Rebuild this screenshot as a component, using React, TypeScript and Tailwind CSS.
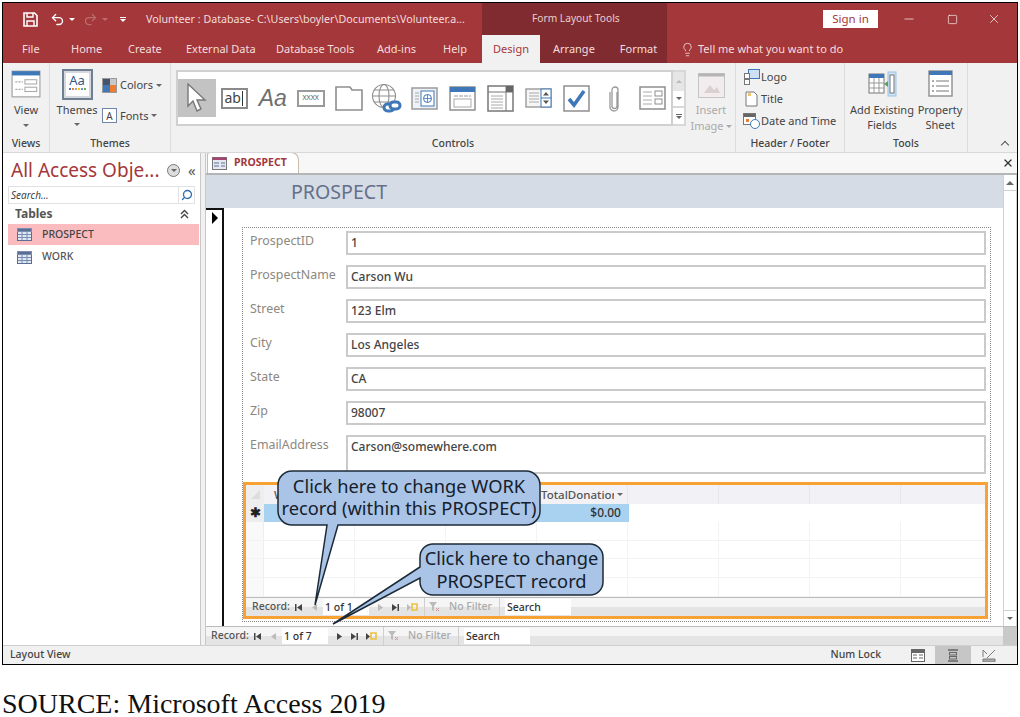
import { Lightbulb, Minus, Redo2, Search, Square, Undo2, X } from "lucide-react"

const grayStroke = "#7a7a7a"
const blue = "#3f78b8"

const tabs = [
  { label: "File", width: "w-[49px]" },
  { label: "Home", width: "w-[57px]" },
  { label: "Create", width: "w-[58px]" },
  { label: "External Data", width: "w-[90px]" },
  { label: "Database Tools", width: "w-[101px]" },
  { label: "Add-ins", width: "w-[66px]" },
  { label: "Help", width: "w-[36px]" },
]

const fields = [
  { label: "ProspectID", value: "1" },
  { label: "ProspectName", value: "Carson Wu" },
  { label: "Street", value: "123 Elm" },
  { label: "City", value: "Los Angeles" },
  { label: "State", value: "CA" },
  { label: "Zip", value: "98007" },
  { label: "EmailAddress", value: "Carson@somewhere.com", tall: true },
]

const themeDots = ["#3f78b8", "#ed7d31", "#a5a5a5", "#ffc000", "#5b9bd5", "#70ad47"]

function FormIcon({ size = 30 }: { size?: number }) {
  return (
    <svg width={size} height={size} viewBox="0 0 28 28" fill="none">
      <rect x="1" y="2" width="26" height="24" fill="#fff" stroke="#9a9a9a" />
      <rect x="1" y="2" width="26" height="4" fill={blue} />
      <path d="M4 12h7M4 19h7" stroke="#aaa" strokeDasharray="2 1" />
      <rect x="13" y="10" width="11" height="4" stroke="#aaa" />
      <rect x="13" y="17" width="11" height="4" stroke="#aaa" />
    </svg>
  )
}

function Caret({ className = "" }: { className?: string }) {
  return <span className={`inline-block h-0 w-0 border-x-[3px] border-t-[3px] border-x-transparent border-t-[#666] ${className}`} />
}

function TitleBar() {
  return (
    <div className="flex h-[32px] bg-[#a4373a] text-[#f1dcdc]">
      <div className="flex w-[479px] items-center">
        <svg className="ml-[20px]" width="15" height="15" viewBox="0 0 15 15" fill="none">
          <path d="M1 1h10.5L14 3.5V14H1z" stroke="#fff" strokeWidth="1.6" />
          <path d="M4 1v4h6V1M4 14V9h7v5" stroke="#fff" strokeWidth="1.4" />
        </svg>
        <Undo2 className="ml-[12px] text-white" size={15} strokeWidth={2.2} />
        <span className="ml-[4px] h-0 w-0 border-x-[3px] border-t-[3px] border-x-transparent border-t-white" />
        <Redo2 className="ml-[8px] text-[#bd6c6e]" size={15} />
        <span className="ml-[4px] h-0 w-0 border-x-[3px] border-t-[3px] border-x-transparent border-t-[#bd6c6e]" />
        <span className="ml-[12px] flex flex-col items-center gap-[1px]">
          <span className="h-[1px] w-[6px] bg-white" />
          <span className="h-0 w-0 border-x-[3px] border-t-[3px] border-x-transparent border-t-white" />
        </span>
        <span className="ml-[20px] text-[10.7px] whitespace-nowrap">Volunteer : Database- C:\Users\boyler\Documents\Volunteer.a...</span>
      </div>
      <div className="flex w-[185px] items-center bg-[#7f2b2f] pl-[50px] text-[10.2px] text-[#e8cfcf]">Form Layout Tools</div>
      <div className="flex flex-1 items-center text-white">
        <button className="ml-[156px] h-[18px] w-[55px] bg-white text-[11.5px] leading-[18px] text-[#a4373a]">Sign in</button>
        <Minus className="ml-[24px]" size={14} strokeWidth={1.2} />
        <Square className="ml-[31px]" size={11} strokeWidth={1.4} />
        <X className="ml-[29px]" size={14} strokeWidth={1.2} />
      </div>
    </div>
  )
}

function TabRow() {
  return (
    <div className="flex h-[28px] bg-[#a4373a] text-[11px] text-[#f3dede]">
      <div className="flex w-[479px] items-center whitespace-nowrap pl-[19px]">
        {tabs.map((t) => (
          <span key={t.label} className={t.width}>{t.label}</span>
        ))}
      </div>
      <div className="flex w-[185px] items-center bg-[#7f2b2f]">
        <span className="flex h-full w-[58px] items-center justify-center bg-[#f1f1f1] text-[#a4373a]">Design</span>
        <span className="ml-[13px]">Arrange</span>
        <span className="ml-[25px]">Format</span>
      </div>
      <div className="ml-[13px] flex items-center gap-[3px]">
        <Lightbulb size={15} strokeWidth={1.3} />
        <span>Tell me what you want to do</span>
      </div>
    </div>
  )
}

function RibbonGroup({ width, label, children }: { width: string; label: string; children: React.ReactNode }) {
  return (
    <div className={`relative flex flex-col ${width} border-r border-[#dcdcdc]`}>
      <div className="flex-1">{children}</div>
      <div className="pb-[2px] text-center text-[10.5px] font-medium leading-[14px] text-[#444]">{label}</div>
    </div>
  )
}

function GalleryIcons() {
  return (
    <>
      <div className="flex h-[38px] w-[38px] items-center justify-center bg-[#c3c3c3]">
        <svg width="22" height="30" viewBox="0 0 22 30" fill="#fff" stroke="#777" strokeWidth="1.4">
          <path d="M2 1v22l5-5 4 10 4-2-4-9h8z" />
        </svg>
      </div>
      <div className="flex h-[38px] w-[38px] items-center justify-center">
        <span className="flex h-[21px] w-[27px] items-center border-2 border-[#8a8a8a] pl-[1px] text-[14px] leading-none text-[#444]">ab<span className="ml-[1px] h-[15px] w-[1px] bg-[#333]" /></span>
      </div>
      <div className="flex h-[38px] w-[38px] items-center justify-center font-['Liberation_Sans'] text-[23px] italic text-[#6e6e6e]">Aa</div>
      <div className="flex h-[38px] w-[38px] items-center justify-center">
        <span className="flex h-[17px] w-[28px] items-center justify-center border-2 border-[#9a9a9a] text-[7px] text-[#555]">XXXX</span>
      </div>
      <div className="flex h-[38px] w-[38px] items-center justify-center">
        <svg width="28" height="25" viewBox="0 0 28 25" fill="none" stroke="#8e8e8e" strokeWidth="1.6">
          <path d="M1 24V1h14l2 3h10v20z" />
        </svg>
      </div>
      <div className="flex h-[38px] w-[38px] items-center justify-center">
        <svg width="31" height="31" viewBox="0 0 31 31" fill="none">
          <g stroke="#8e8e8e" strokeWidth="1.1">
            <circle cx="13" cy="13" r="11.5" />
            <ellipse cx="13" cy="13" rx="5" ry="11.5" />
            <path d="M1.5 13h23M3 7h20M3 19h20" />
          </g>
          <g stroke={blue} strokeWidth="3" fill="#fff">
            <rect x="13" y="21" width="10" height="7" rx="3.5" />
            <rect x="19" y="19" width="10" height="7" rx="3.5" />
          </g>
        </svg>
      </div>
      <div className="flex h-[38px] w-[38px] items-center justify-center">
        <svg width="27" height="23" viewBox="0 0 27 23" fill="#fff">
          <rect x="1" y="1" width="25" height="21" stroke="#9a9a9a" strokeWidth="1.5" fill="#eef1f5" />
          <path d="M4 6h4M4 9h4M4 12h4M4 15h4" stroke="#aaa" />
          <rect x="10" y="4" width="13" height="15" stroke={blue} />
          <circle cx="16.5" cy="11.5" r="4" stroke={blue} />
          <path d="M12.5 11.5h8M16.5 7.500v8" stroke={blue} strokeWidth=".8" />
        </svg>
      </div>
      <div className="flex h-[38px] w-[38px] items-center justify-center">
        <svg width="27" height="25" viewBox="0 0 27 25" fill="#fff">
          <rect x="1" y="1" width="25" height="23" stroke="#8e8e8e" strokeWidth="1.5" />
          <rect x="1" y="1" width="25" height="5" fill={blue} />
          <path d="M5 10h17" stroke="#999" strokeDasharray="4 1" />
          <rect x="5" y="13" width="17" height="8" stroke="#aaa" />
        </svg>
      </div>
      <div className="flex h-[38px] w-[38px] items-center justify-center">
        <svg width="27" height="27" viewBox="0 0 27 27" fill="#fff">
          <rect x="1" y="1" width="25" height="25" stroke="#777" strokeWidth="1.5" />
          <path d="M1 7h25M19 1v25" stroke="#777" />
          <rect x="19" y="1" width="7" height="6" fill="#666" />
          <path d="M4 11h12M4 14h12M4 17h12M4 20h12M4 23h12" stroke="#aaa" />
        </svg>
      </div>
      <div className="flex h-[38px] w-[38px] items-center justify-center">
        <svg width="27" height="20" viewBox="0 0 27 20" fill="#fff">
          <rect x="1" y="1" width="25" height="18" stroke="#9a9a9a" strokeWidth="1.4" fill="#f6f6f6" />
          <path d="M4 5h10M4 8h10M4 11h10M4 14h10" stroke="#aaa" />
          <rect x="16" y="1" width="10" height="18" stroke={blue} />
          <path d="M16 10h10" stroke={blue} />
          <path d="M21 4l3 3.500h-6zM21 16l3-3.500h-6z" fill="#555" />
        </svg>
      </div>
      <div className="flex h-[38px] w-[38px] items-center justify-center">
        <svg width="27" height="27" viewBox="0 0 27 27" fill="#fff">
          <rect x="1" y="1" width="25" height="25" stroke="#8e8e8e" strokeWidth="1.5" />
          <path d="M6 14l5 6L21 6" fill="none" stroke={blue} strokeWidth="3.600" />
        </svg>
      </div>
      <div className="flex h-[38px] w-[38px] items-center justify-center">
        <svg width="12" height="28" viewBox="0 0 12 28" fill="none" stroke="#999" strokeWidth="1.3">
          <path d="M8 7v14a2.500 2.500 0 0 1-5 0V5a3 3 0 0 1 6 0v17a4 4 0 0 1-8 0V7" transform="translate(1 1)" />
        </svg>
      </div>
      <div className="flex h-[38px] w-[38px] items-center justify-center">
        <svg width="27" height="24" viewBox="0 0 27 24" fill="#fff" stroke="#8e8e8e">
          <rect x="1" y="1" width="25" height="22" strokeWidth="1.5" />
          <path d="M4 6h9M4 10h9M4 14h9M4 18h9" stroke="#aaa" />
          <rect x="16" y="5" width="7" height="5" />
          <rect x="16" y="13" width="7" height="5" />
        </svg>
      </div>
    </>
  )
}

function Ribbon() {
  return (
    <div className="flex h-[89px] bg-[#f1f1f1] text-[11px] text-[#444]">
      <RibbonGroup width="w-[47px]" label="Views">
        <div className="flex flex-col items-center pt-[6px]">
          <FormIcon />
          <span className="mt-[4px] leading-[14px]">View</span>
          <Caret className="mt-[7px]" />
        </div>
      </RibbonGroup>
      <RibbonGroup width="w-[121px]" label="Themes">
        <div className="flex gap-[3px] pl-[5px] pt-[6px]">
          <div className="flex w-[44px] flex-col items-center">
            <div className="flex h-[31px] w-[31px] flex-col items-center border-2 border-[#6f7f91] bg-[#d4d9e0] p-[2px]">
              <div className="flex w-full flex-1 flex-col items-center bg-white">
                <span className="text-[13px] leading-[15px] text-[#2f5a8a]">Aa</span>
                <span className="flex gap-[1px]">
                  {themeDots.map((c) => (
                    <span key={c} className="h-[2px] w-[2px]" style={{ backgroundColor: c }} />
                  ))}
                </span>
              </div>
            </div>
            <span className="mt-[3px] leading-[14px]">Themes</span>
            <Caret className="mt-[6px]" />
          </div>
          <div className="flex flex-col gap-[14px] pt-[8px]">
            <div className="flex items-center gap-[3px]">
              <span className="grid h-[15px] w-[15px] grid-cols-2 border border-[#999]">
                <span className="bg-[#44546a]" /><span className="bg-[#c9c9c9]" />
                <span className="bg-[#3f78b8]" /><span className="bg-[#ed7d31]" />
              </span>
              <span>Colors</span>
              <Caret />
            </div>
            <div className="flex items-center gap-[3px]">
              <span className="flex h-[15px] w-[15px] items-center justify-center border border-[#6f86a8] bg-white text-[10px] leading-none">A</span>
              <span>Fonts</span>
              <Caret />
            </div>
          </div>
        </div>
      </RibbonGroup>
      <RibbonGroup width="w-[565px]" label="Controls">
        <div className="flex pl-[5px] pt-[7px]">
          <div className="flex h-[56px] w-[497px] items-center border-2 border-[#d0d0d0] bg-white">
            <GalleryIcons />
          </div>
          <div className="flex h-[56px] w-[13px] flex-col border-y-2 border-r-2 border-[#d8d8d8] bg-white">
            <span className="flex h-[19px] items-center justify-center bg-[#e6e6e6]"><span className="h-0 w-0 border-x-[3px] border-b-[3px] border-x-transparent border-b-[#bbb]" /></span>
            <span className="flex h-[17px] items-center justify-center border-b-2 border-[#d8d8d8]"><Caret /></span>
            <span className="flex flex-1 flex-col items-center justify-center gap-[1px]"><span className="h-[1px] w-[6px] bg-[#666]" /><Caret /></span>
          </div>
          <div className="ml-[2px] flex w-[46px] flex-col items-center leading-[16px] text-[#aaa]">
            <svg width="27" height="25" viewBox="0 0 27 25" className="mt-[3px]">
              <rect x=".5" y=".5" width="26" height="24" fill="#f3ecee" stroke="#c5c5c5" />
              <rect x=".5" y=".5" width="26" height="3" fill="#b5b5b5" />
              <path d="M6 20l6-8 4 5 3-3 3 6z" fill="#d9d0d2" />
            </svg>
            <span className="mt-[4px]">Insert</span>
            <span className="flex items-center gap-[2px] whitespace-nowrap">Image<span className="h-0 w-0 border-x-[3px] border-t-[3px] border-x-transparent border-t-[#aaa]" /></span>
          </div>
        </div>
      </RibbonGroup>
      <RibbonGroup width="w-[109px]" label="Header / Footer">
        <div className="flex flex-col gap-[5px] pl-[7px] pt-[5px] leading-[17px]">
          <div className="flex items-center gap-[1px]">
            <svg width="17" height="17" viewBox="0 0 17 17" fill="#fff" stroke="#777">
              <rect x="5.500" y="1.500" width="11" height="9" fill="#cfe0f3" stroke={blue} />
              <rect x="1.500" y="5.500" width="5" height="5" />
              <rect x="1.500" y="11.500" width="5" height="5" />
            </svg>
            <span>Logo</span>
          </div>
          <div className="flex items-center gap-[3px] pl-[2px]">
            <svg width="13" height="16" viewBox="0 0 13 16" fill="#fff" stroke="#777">
              <path d="M1 1h8l3 3v11H1z" />
              <path d="M3 2h3v3H3z" fill="#f0c46c" stroke="none" />
            </svg>
            <span>Title</span>
          </div>
          <div className="flex items-center gap-[1px]">
            <svg width="17" height="17" viewBox="0 0 17 17" fill="#fff" stroke="#777">
              <rect x=".5" y="1.500" width="12" height="11" />
              <path d="M1 2h11v3H1z" fill="#666" stroke="none" />
              <path d="M3 7h3v3H3z" fill="#ed7d31" stroke="none" />
              <circle cx="12" cy="12" r="4.500" stroke={blue} />
            </svg>
            <span className="whitespace-nowrap">Date and Time</span>
          </div>
        </div>
      </RibbonGroup>
      <RibbonGroup width="w-[123px]" label="Tools">
        <div className="flex gap-[4px] pl-[5px] pt-[7px] text-center leading-[15px]">
          <div className="flex w-[64px] flex-col items-center whitespace-nowrap">
            <svg width="29" height="27" viewBox="0 0 29 27" fill="#fff">
              <rect x="1" y="4" width="15" height="19" stroke="#777" />
              <rect x="1" y="4" width="15" height="4" fill={blue} />
              <path d="M1 13h15M1 18h15M6 8v15M11 8v15" stroke="#999" />
              <rect x="20" y="2" width="8" height="24" fill="#cfe3f5" stroke="#9cc3e6" />
              <rect x="22" y="5" width="4" height="18" stroke="#777" />
              <path d="M16 14l4-3v6z" fill="#5aa05a" />
            </svg>
            <span className="mt-[5px]">Add Existing</span>
            <span>Fields</span>
          </div>
          <div className="flex w-[44px] flex-col items-center whitespace-nowrap">
            <svg width="25" height="27" viewBox="0 0 25 27" fill="#fff">
              <rect x="1" y="1" width="23" height="25" stroke="#8e8e8e" strokeWidth="1.4" />
              <rect x="1" y="1" width="23" height="4" fill={blue} />
              <path d="M8 11h13M8 16h13M8 21h13" stroke="#777" />
              <path d="M4 11h2M4 16h2M4 21h2" stroke="#555" />
            </svg>
            <span className="mt-[5px]">Property</span>
            <span>Sheet</span>
          </div>
        </div>
      </RibbonGroup>
      <div className="relative flex-1">
        <span className="absolute bottom-[5px] right-[9px] h-[6px] w-[6px] translate-y-[1px] rotate-45 border-l border-t border-[#555]" />
      </div>
    </div>
  )
}

function TableIcon() {
  return (
    <svg width="15" height="13" viewBox="0 0 15 13" fill="#fff" stroke="#7b8db0">
      <rect x=".5" y=".5" width="14" height="12" fill="#dfe7f3" stroke="#5b6f96" />
      <rect x=".5" y=".5" width="14" height="3" fill="#5b6f96" />
      <path d="M1 6.500h13M1 9.500h13M5 4v8M10 4v8" />
    </svg>
  )
}

function NavPane() {
  return (
    <div className="flex w-[197px] shrink-0 flex-col bg-white">
      <div className="flex h-[33px] items-center pl-[8px] pt-[2px]">
        <span className="w-[156px] text-[19px] leading-none whitespace-nowrap text-[#a4373a]">All Access Obje...</span>
        <span className="flex h-[13px] w-[13px] items-center justify-center rounded-full border border-[#777] bg-[#ddd]"><Caret /></span>
        <span className="ml-[8px] text-[15px] leading-none text-[#555]">«</span>
      </div>
      <div className="mx-[5px] flex h-[18px] items-center border border-[#e2e2e2] pl-[2px] font-['Open_Sans'] text-[10px] italic text-[#333]">
        <span className="flex-1">Search...</span>
        <span className="flex h-full w-[16px] items-center justify-center border-l border-[#e2e2e2]"><Search className="-scale-x-100 text-[#2f6fb0]" size={12} strokeWidth={2.6} /></span>
      </div>
      <div className="flex h-[20px] items-center pl-[12px] pr-[11px] text-[12px] font-bold text-[#555]">
        <span className="flex-1">Tables</span>
        <svg width="9" height="10" viewBox="0 0 9 10" fill="none" stroke="#444" strokeWidth="1.4"><path d="M1 5l3.500-3.500L8 5M1 9l3.500-3.500L8 9" /></svg>
      </div>
      <div className="ml-[5px] mr-[1px] flex h-[21px] items-center gap-[10px] bg-[#fbbcc0] pl-[9px] text-[10.5px] font-medium text-[#444]">
        <TableIcon />PROSPECT
      </div>
      <div className="ml-[5px] mr-[1px] mt-[2px] flex h-[20px] items-center gap-[10px] pl-[9px] text-[10.5px] font-medium text-[#555]">
        <TableIcon />WORK
      </div>
    </div>
  )
}

function NavArrow({ kind, dim }: { kind: "first" | "prev" | "next" | "last" | "new"; dim?: boolean }) {
  const fill = dim ? "#bbb" : "#444"
  return (
    <svg width="11" height="9" viewBox="0 0 11 9" fill={fill}>
      {kind === "first" && <path d="M2 1h1.500v7H2zM9 1v7L4 4.500z" />}
      {kind === "prev" && <path d="M8 1v7L3 4.500z" />}
      {kind === "next" && <path d="M3 1v7l5-3.500z" />}
      {kind === "last" && <path d="M2 1v7l5-3.500zM7.500 1H9v7H7.500z" />}
      {kind === "new" && (
        <>
          <path d="M0 1v7l4-3.500z" fill={dim ? "#bbb" : "#444"} />
          <path d="M5 1h5v6H5z" fill="none" stroke="#eac23e" strokeWidth="1.600" />
        </>
      )}
    </svg>
  )
}

function RecordNav({ page, nested }: { page: string; nested?: boolean }) {
  return (
    <div className="flex h-[18px] items-center bg-[linear-gradient(#f5f5f5_50%,#e4e4e4_50%)] text-[10.5px] font-medium text-[#555]">
      <span className={`${nested ? "ml-[6px]" : "ml-[5px]"} w-[41px]`}>Record:</span>
      <NavArrow kind="first" />
      <span className="ml-[5px]"><NavArrow kind="prev" dim /></span>
      <span className="ml-[3px] h-[16px] w-[46px] bg-white pl-[2px] leading-[16px] text-[#333]">{page}</span>
      <span className="ml-[6px]"><NavArrow kind="next" dim={nested} /></span>
      <span className="ml-[4px]"><NavArrow kind="last" /></span>
      <span className="ml-[6px]"><NavArrow kind="new" dim={nested} /></span>
      <span className="ml-[6px] flex h-full w-[76px] items-center border-x border-[#cfcfcf] pl-[4px] text-[#aaa]">
        <svg width="11" height="10" viewBox="0 0 11 10" fill="#bbb"><path d="M0 0h8L5 4v5L3 8V4z" /><path d="M7 6l3 3M10 6L7 9" stroke="#c99" fill="none" /></svg>
        <span className="ml-[9px] whitespace-nowrap">No Filter</span>
      </span>
      <span className="ml-[5px] h-[16px] w-[66px] bg-white pl-[2px] leading-[16px] text-[#333]">Search</span>
    </div>
  )
}

function SubDatasheet() {
  const cols = [0, 1, 2, 3, 4, 5, 6, 7]
  const rows = [0, 1, 2, 3]
  return (
    <div className="flex h-[137px] flex-col overflow-hidden border-[3px] border-[#f7a233] bg-white">
      <div className="flex h-[19px] bg-[#f1f1f6]">
        <div className="flex w-[18px] shrink-0 items-center justify-center bg-[#eeeeee]"><span className="h-0 w-0 border-b-[9px] border-l-[9px] border-b-[#ddd] border-l-transparent" /></div>
        {cols.map((c) => (
          <div key={c} className="flex w-[91px] shrink-0 items-center overflow-hidden border-r border-[#e6e6ec] pl-[4px] text-[11.5px] font-medium text-[#555]">
            {c === 0 && <span className="pl-[6px]">W</span>}
            {c === 3 && (
              <>
                <span className="w-[73px] overflow-hidden whitespace-nowrap">TotalDonation</span>
                <Caret className="ml-[3px] shrink-0" />
              </>
            )}
          </div>
        ))}
      </div>
      <div className="flex h-[18px]">
        <div className="flex w-[18px] items-center justify-center bg-[#eeeeee] text-[13px] font-bold leading-none text-[#222]">✱</div>
        <div className="flex w-[365px] items-center justify-end bg-[#a9d1f0] pr-[8px] text-[12px] font-medium text-[#333]">$0.00</div>
      </div>
      {rows.map((r) => (
        <div key={r} className="flex h-[19px] border-b border-[#f3f3f3]">
          <div className="w-[18px] shrink-0 border-r border-[#eee] bg-[#f9f9f9]" />
          {cols.map((c) => (
            <div key={c} className="w-[91px] shrink-0 border-r border-[#f3f3f3]" />
          ))}
        </div>
      ))}
      <div className="mt-auto border-t border-[#bbb]">
        <RecordNav page="1 of 1" nested />
      </div>
    </div>
  )
}

function FormBody() {
  return (
    <div className="flex flex-1 overflow-hidden bg-white">
      <div className="flex w-[797px] flex-col">
        <div className="flex h-[33px] items-center bg-[#d6dce5] pl-[85px] text-[19.6px] text-[#64708a]">PROSPECT</div>
        <div className="flex flex-1">
          <div className="h-full w-[18px] border-r-2 border-t-2 border-[#111] pl-[6px] pt-[2px]">
            <span className="block h-0 w-0 border-y-[6px] border-l-[6px] border-y-transparent border-l-black" />
          </div>
          <div className="flex-1 pl-[18px] pt-[19px]">
            <div className="h-[395px] w-[749px] border border-dotted border-[#888] pt-[3px]">
              <div className="flex flex-col gap-[10px] pl-[7px] pr-[4px]">
                {fields.map((f) => (
                  <div key={f.label} className="flex">
                    <span className="w-[96px] shrink-0 text-[12.400px] leading-[20px] text-[#8c8880]">{f.label}</span>
                    <span className={`${f.tall ? "h-[39px]" : "h-[24px]"} flex-1 border-2 border-[#cacaca] pl-[3px] text-[12px] leading-[20px] font-medium text-[#444]`}>{f.value}</span>
                  </div>
                ))}
              </div>
              <div className="mr-[2px] mt-[8px]">
                <SubDatasheet />
              </div>
            </div>
          </div>
        </div>
      </div>
      <div className="flex w-[14px] flex-col border-x border-[#d0d0d0] bg-white">
        <span className="flex h-[16px] items-center justify-center border-b border-[#d0d0d0]"><span className="h-0 w-0 border-x-[4px] border-b-[4px] border-x-transparent border-b-[#666]" /></span>
        <span className="flex-1" />
        <span className="flex h-[16px] items-center justify-center border-t border-[#d0d0d0]"><Caret /></span>
      </div>
    </div>
  )
}

function DocumentArea() {
  return (
    <div className="flex min-w-0 flex-1 flex-col">
      <div className="flex h-[22px] items-end border-b-2 border-[#b5b5b5] bg-[#f7f7f7]">
        <div className="ml-[1px] flex h-[21px] w-[92px] items-center gap-[7px] rounded-tl-[3px] rounded-tr-[8px] border-x border-t border-[#c8bcae] bg-white pl-[4px] text-[10.5px] font-bold text-[#a4373a]">
          <svg width="15" height="13" viewBox="0 0 15 13" fill="#fff" stroke="#777">
            <rect x=".5" y=".5" width="14" height="12" fill="#e7e9f2" />
            <rect x=".5" y=".5" width="14" height="2.500" fill="#a3456f" stroke="none" />
            <path d="M2 6h5M2 9h5M9 6h4M9 9h4" stroke="#5b6f96" />
          </svg>
          PROSPECT
        </div>
        <X className="mb-[4px] ml-auto mr-[3px] text-[#333]" size={12} strokeWidth={2.6} />
      </div>
      <FormBody />
      <div className="flex h-[19px] border-t border-[#bbb]">
        <div className="w-[797px]"><RecordNav page="1 of 7" /></div>
        <div className="flex-1 bg-[#c9c9c9]" />
      </div>
    </div>
  )
}

function StatusBar() {
  return (
    <div className="flex h-[19px] items-center border-t border-[#cfcfcf] bg-[#f1f1f1] pl-[7px] pr-[11px] text-[10.5px] font-medium text-[#444]">
      <span className="flex-1">Layout View</span>
      <span>Num Lock</span>
      <span className="ml-[19px] flex h-full w-[35px] items-center justify-center">
        <svg width="14" height="13" viewBox="0 0 14 13" fill="#fff" stroke="#666"><rect x=".5" y=".5" width="13" height="12" /><rect x=".5" y=".5" width="13" height="3" fill="#666" /><path d="M2 6h4M2 9h4M8 6h4M8 9h4" /></svg>
      </span>
      <span className="flex h-full w-[36px] items-center justify-center bg-[#c6c6c6]">
        <svg width="12" height="13" viewBox="0 0 12 13" fill="none" stroke="#666"><path d="M1 1h10M1 12h10" strokeWidth="1.500" /><rect x="2.500" y="3.500" width="7" height="2.500" /><rect x="2.500" y="7.500" width="7" height="2.500" /></svg>
      </span>
      <span className="flex h-full w-[35px] items-center justify-center">
        <svg width="14" height="13" viewBox="0 0 14 13" fill="none" stroke={grayStroke}><path d="M1 1l4 4M13 1L5 9M1 1v7" /><path d="M1 10h12v3H1z" fill="#aaa" /></svg>
      </span>
    </div>
  )
}

function Callouts() {
  return (
    <>
      <svg className="absolute left-0 top-0" width="1020" height="717" fill="#a9c4e6" stroke="#1d2a38" strokeWidth="1.500">
        <path d="M292 471H526a14 14 0 0 1 14 14V511a14 14 0 0 1-14 14H338L315 605 327 525H292a14 14 0 0 1-14-14V485a14 14 0 0 1 14-14Z" />
        <path d="M433 544H590a13 13 0 0 1 13 13V582a13 13 0 0 1-13 13H433a13 13 0 0 1-13-13V578L333 624 420 567V557a13 13 0 0 1 13-13Z" />
      </svg>
      <div className="absolute left-[278px] top-[475px] w-[262px] whitespace-nowrap text-center text-[18.300px] leading-[22px] text-[#14202c]">
        Click here to change WORK<br />record (within this PROSPECT)
      </div>
      <div className="absolute left-[420px] top-[546px] w-[183px] whitespace-nowrap text-center text-[18.300px] leading-[23px] text-[#14202c]">
        Click here to change<br />PROSPECT record
      </div>
    </>
  )
}

export default function App() {
  return (
    <div className="relative h-[717px] w-[1020px] overflow-hidden bg-white pl-[2px] pr-[2px] pt-[2px] font-['Noto_Sans',sans-serif]">
      <div className="flex h-[663px] flex-col border border-black bg-[#f1f1f1]">
        <TitleBar />
        <TabRow />
        <Ribbon />
        <div className="flex min-h-0 flex-1 overflow-hidden border-t border-[#d8d8d8]">
          <NavPane />
          <div className="w-[6px] shrink-0 border-x border-[#c8c8c8] bg-[#f1f1f1]" />
          <DocumentArea />
        </div>
        <StatusBar />
      </div>
      <div className="pt-[28px] font-['Liberation_Serif',serif] text-[28px] leading-[22px] text-[#111]">SOURCE: Microsoft Access 2019</div>
      <Callouts />
    </div>
  )
}
